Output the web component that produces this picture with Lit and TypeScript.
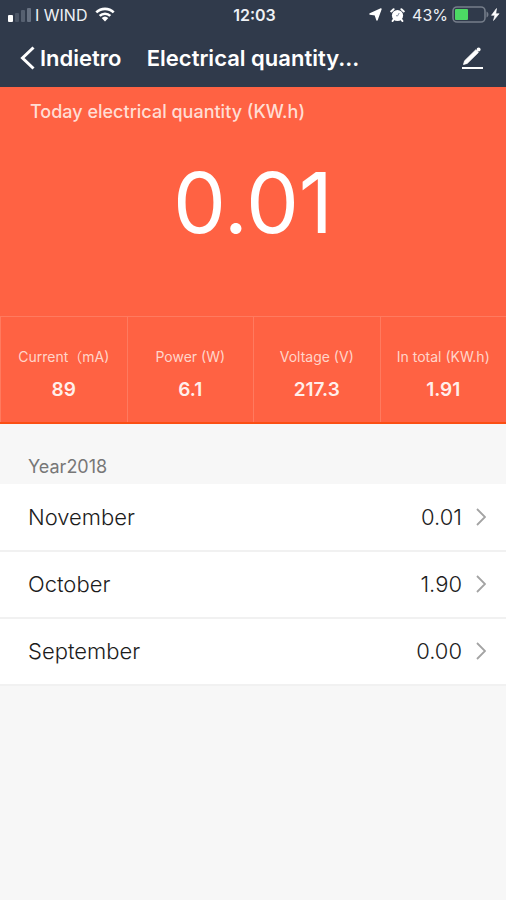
import { LitElement, html, css } from "lit";
import { customElement, state } from "lit/decorators.js";

interface Stat { label: string; value: string; }
interface Month { name: string; value: string; }

@customElement("status-bar")
class StatusBar extends LitElement {
  static styles = css`
    :host {
      display: grid;
      grid-template-columns: 1fr auto 1fr;
      align-items: center;
      height: 29px;
      padding: 0 5px 0 8px;
      font-size: 16px;
      font-weight: 400;
      color: #eef1f5;
    }
    .side { display: flex; align-items: center; gap: 4px; }
    .end { justify-content: flex-end; }
    .carrier { margin-right: 4px; }
    .alarm { margin: 0 3px 0 4px; }
    .time { font-weight: 600; }
    svg { display: block; flex: none; }
  `;
  render() {
    return html`
      <div class="side">
        <svg width="23" height="15" viewBox="0 0 23 15" aria-hidden="true">
          <rect x="0" y="8" width="5" height="7" rx="1" fill="#fff" />
          <rect x="7" y="6" width="4" height="9" rx="1" fill="#4c5666" />
          <rect x="13" y="3" width="4" height="12" rx="1" fill="#566070" />
          <rect x="19" y="1" width="4" height="14" rx="1" fill="#667080" />
        </svg>
        <span class="carrier">I WIND</span>
        <svg width="20" height="15" viewBox="0 0 20 15" aria-hidden="true">
          <g fill="none" stroke="#fff" stroke-width="2.6">
            <path d="M1.3 5.4a12.4 12.4 0 0 1 17.4 0" />
            <path d="M4.7 8.9a7.6 7.6 0 0 1 10.6 0" />
          </g>
          <path d="M10 14.6 6.7 11.1a4.8 4.8 0 0 1 6.6 0z" fill="#fff" />
        </svg>
      </div>
      <span class="time">12:03</span>
      <div class="side end">
        <svg width="13" height="13" viewBox="0 0 13 13" aria-hidden="true">
          <path d="M12 1 8 12 6.200 6.800 1 6z" fill="#fff" stroke="#fff" stroke-width="1.400" stroke-linejoin="round" />
        </svg>
        <svg class="alarm" width="15" height="14" viewBox="0 0 15 14" aria-hidden="true">
          <circle cx="7.500" cy="7.500" r="5.600" fill="#fff" />
          <path d="M1.200 3.400 3.600 1.200M13.800 3.400 11.400 1.200M3.600 11.600 2.600 13M11.400 11.600l1 1.400" stroke="#fff" stroke-width="2" stroke-linecap="round" />
          <path d="M7.500 8 9.200 5M7.500 8 6 7.600" stroke="#8790a0" stroke-width="1" fill="none" />
        </svg>
        <span>43%</span>
        <svg width="49" height="18" viewBox="0 0 49 18" aria-hidden="true">
          <rect x="1" y="1" width="32" height="15" rx="4" fill="none" stroke="#757d8a" stroke-width="1.600" />
          <path d="M34.500 5.500c2.600.8 2.600 5.200 0 6z" fill="#757d8a" />
          <rect x="3" y="3" width="13" height="11" rx="1" fill="#4cd964" />
          <path d="M44.500 2.500 39.500 9.300h3.300L41.500 14.500l5.600-6.800h-3.300z" fill="#fff" stroke="#fff" stroke-width=".6" />
        </svg>
      </div>
    `;
  }
}

@customElement("month-row")
class MonthRow extends LitElement {
  static properties = { name: {}, value: {} };
  declare name: string;
  declare value: string;
  static styles = css`
    :host { display: block; }
    .row {
      box-sizing: border-box;
      display: flex;
      align-items: center;
      width: 100%;
      min-height: 67px;
      padding: 0 20px 2px 28px;
      border: 0;
      border-bottom: 2px solid #f1f1f1;
      background: #fff;
      color: #1c1c1c;
      font: inherit;
      font-size: 22px;
      font-weight: 300;
      text-align: left;
      cursor: pointer;
    }
    .name { flex: 1; }
    .value { margin-right: 14px; }
  `;
  render() {
    return html`
      <button class="row" type="button">
        <span class="name">${this.name}</span>
        <span class="value">${this.value}</span>
        <svg width="10" height="18" viewBox="0 0 10 18" aria-hidden="true">
          <path d="M1 1l8 8-8 8" fill="none" stroke="#a3a3a3" stroke-width="1.800" />
        </svg>
      </button>
    `;
  }
}

@customElement("app-root")
class AppRoot extends LitElement {
  @state() private stats: Stat[] = [
    { label: "Current（mA)", value: "89" },
    { label: "Power (W)", value: "6.1" },
    { label: "Voltage (V)", value: "217.3" },
    { label: "In total (KW.h)", value: "1.91" },
  ];
  @state() private months: Month[] = [
    { name: "November", value: "0.01" },
    { name: "October", value: "1.90" },
    { name: "September", value: "0.00" },
  ];

  static styles = css`
    :host {
      display: block;
      min-height: 100vh;
      background: #f7f7f7;
      font-family: Inter, "Noto Sans CJK SC", sans-serif;
    }
    header { background: #303a4b; color: #fff; }
    nav {
      display: grid;
      grid-template-columns: 1fr auto 1fr;
      align-items: center;
      height: 58px;
      padding: 0 20px;
    }
    nav button {
      display: flex;
      align-items: center;
      gap: 5px;
      padding: 0;
      border: 0;
      background: none;
      color: inherit;
      font: inherit;
      font-size: 22px;
      font-weight: 600;
      cursor: pointer;
    }
    nav .edit { justify-self: end; }
    h1 { margin: 0; font-size: 22px; font-weight: 600; line-height: 28px; }
    .hero { background: #ff6243; color: #fff; }
    .today { display: flex; flex-direction: column; height: 229px; }
    h2 {
      margin: 0;
      padding: 12px 30px 0;
      font-size: 18px;
      font-weight: 500;
      line-height: 26px;
      color: #ffddd4;
    }
    .total {
      margin: 26px 0 0;
      text-align: center;
      font-size: 84px;
      font-weight: 400;
      line-height: 104px;
    }
    dl {
      display: grid;
      grid-template-columns: repeat(4, 1fr);
      margin: 0;
      border-bottom: 2px solid #fb4f14;
    }
    .stat {
      box-sizing: border-box;
      display: flex;
      flex-direction: column;
      align-items: center;
      gap: 12px;
      height: 106px;
      padding-top: 30px;
      border-top: 1px solid #ff7a5f;
      border-left: 1px solid #ff7a5f;
      white-space: nowrap;
    }
    dt { font-size: 14px; line-height: 20px; color: #ffd5ca; }
    dd { margin: 0; font-size: 19px; font-weight: 600; line-height: 22px; color: #ffefeb; }
    h3 {
      margin: 0;
      padding: 30px 28px 4px;
      font-size: 18px;
      font-weight: 400;
      line-height: 26px;
      color: #777;
    }
    .months { padding-top: 1px; background: #fff; }
  `;

  render() {
    return html`
      <header>
        <status-bar></status-bar>
        <nav>
          <button type="button">
            <svg width="15" height="24" viewBox="0 0 15 24" aria-hidden="true">
              <path d="M13.500 1.500 2.500 12l11 10.500" fill="none" stroke="#fff" stroke-width="3" />
            </svg>
            Indietro
          </button>
          <h1>Electrical quantity...</h1>
          <button class="edit" type="button" aria-label="Edit">
            <svg width="26" height="24" viewBox="0 0 26 24" aria-hidden="true">
              <path d="M2 22h21" stroke="#fff" stroke-width="2" />
              <path d="M3.500 18.500 4.600 14.800 15.800 3.800 18.400 6.400 7.200 17.400z" fill="#fff" stroke="#fff" stroke-width=".8" stroke-linejoin="round" />
              <circle cx="18.600" cy="3.600" r="2" fill="#fff" />
            </svg>
          </button>
        </nav>
      </header>
      <section class="hero">
        <div class="today">
          <h2>Today electrical quantity (KW.h)</h2>
          <p class="total">0.01</p>
        </div>
        <dl>
          ${this.stats.map(
            (s) => html`<div class="stat"><dt>${s.label}</dt><dd>${s.value}</dd></div>`
          )}
        </dl>
      </section>
      <section>
        <h3>Year2018</h3>
        <div class="months">
          ${this.months.map(
            (m) => html`<month-row .name=${m.name} .value=${m.value}></month-row>`
          )}
        </div>
      </section>
    `;
  }
}
